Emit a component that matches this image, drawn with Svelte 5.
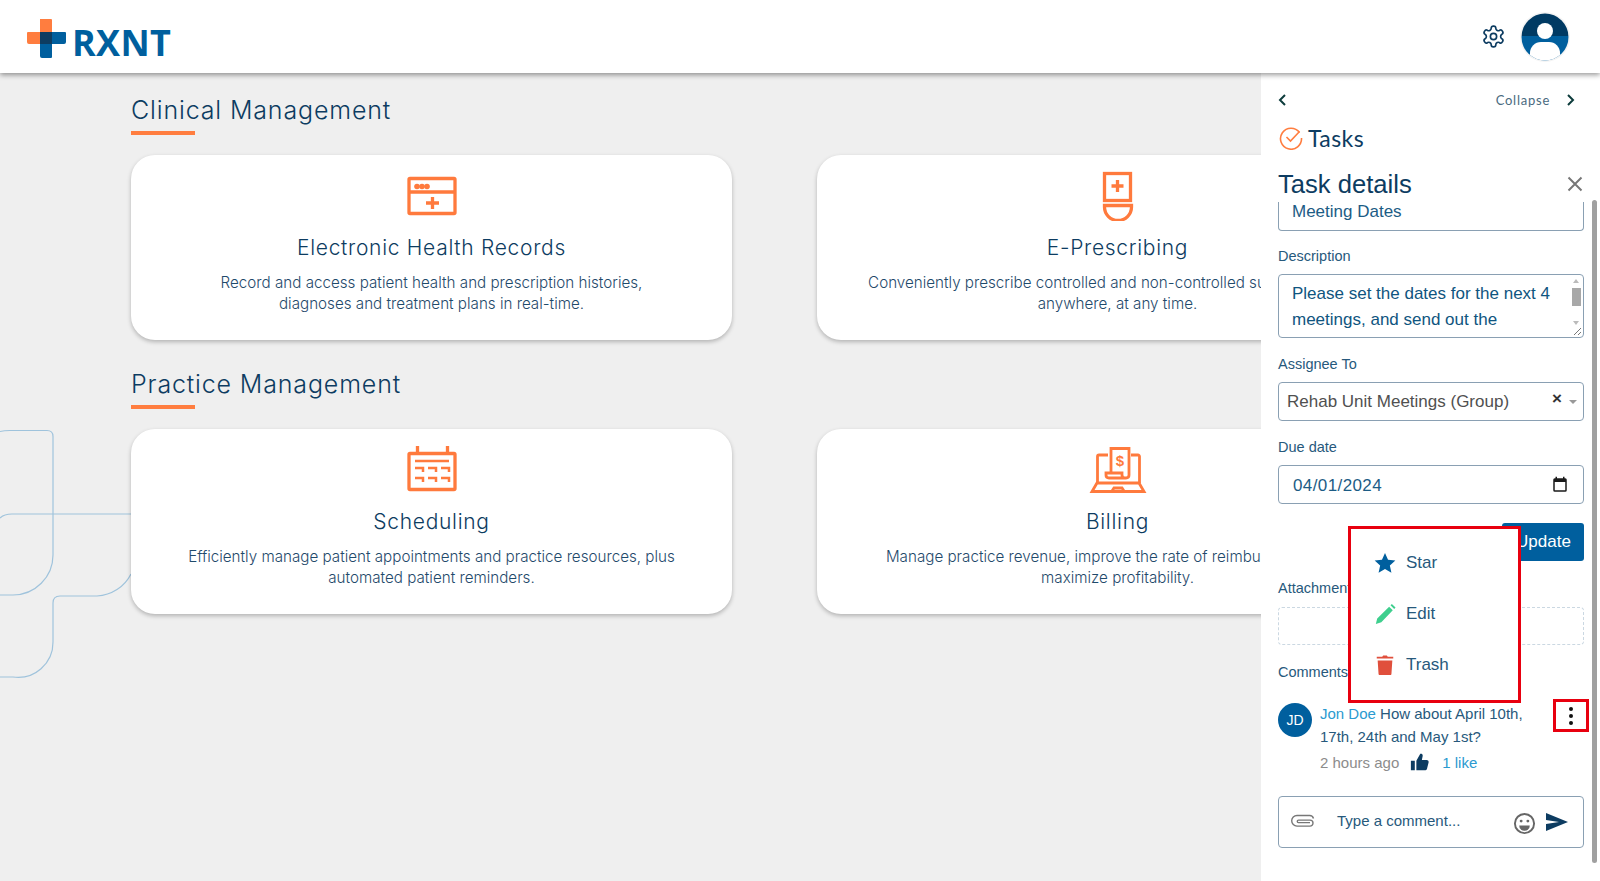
<script>
  const sections = [
    { title: 'Clinical Management', cards: [
      { icon: 'ehr', title: 'Electronic Health Records', lines: ['Record and access patient health and prescription histories,', 'diagnoses and treatment plans in real-time.'] },
      { icon: 'rx', title: 'E-Prescribing', lines: ['Conveniently prescribe controlled and non-controlled substances from', 'anywhere, at any time.'] }
    ]},
    { title: 'Practice Management', cards: [
      { icon: 'cal', title: 'Scheduling', lines: ['Efficiently manage patient appointments and practice resources, plus', 'automated patient reminders.'] },
      { icon: 'bill', title: 'Billing', lines: ['Manage practice revenue, improve the rate of reimbursement and', 'maximize profitability.'] }
    ]}
  ];
</script>

{#snippet cardIcon(name)}
  <svg class="card-icon" viewBox="0 0 60 50" width="60" height="50" fill="none" stroke="#ff7a3d" stroke-width="3.300">
    {#if name === 'ehr'}
      <rect x="7" y="7.500" width="46" height="35" rx="1" />
      <path d="M7 21h46M30.500 26v12M24 32h13" />
      <g fill="#ff7a3d" stroke="none"><circle cx="15" cy="15.500" r="2.800" /><circle cx="20" cy="15.500" r="2.800" /><circle cx="25" cy="15.500" r="2.800" /></g>
    {:else if name === 'rx'}
      <rect x="16.500" y="2.500" width="26" height="27" />
      <path d="M29.500 9v12M23.500 15h12" />
      <path d="M16.500 34.500h27V36a13.500 13.500 0 0 1-27 0z" />
    {:else if name === 'cal'}
      <rect x="7" y="8.500" width="46" height="36" rx="1" />
      <path d="M15.500 1v8M45.500 1v8" />
      <path stroke-width="2.500" d="M13 16h34M13 23h8v4M26 23h8v4M39 23h8v4M13 33h8v4M26 33h8v4M39 33h8v4" />
    {:else}
      <path stroke-width="2.800" d="M20 10h-9a1.500 1.500 0 0 0-1.500 1.500V38M43 10h7a1.500 1.500 0 0 1 1.500 1.500V38" />
      <path stroke-width="2.800" d="M9 38h42l5 8.500H4zM24 46l2-3h8l2 3" />
      <path stroke-width="2.800" d="M23 27V3.500h18V30q0 3-3 3H21q-3 0-3-3v-2h16v2q0 3 3 3" />
      <text x="32" y="21" class="dollar" text-anchor="middle">$</text>
    {/if}
  </svg>
{/snippet}

<div class="page">
  <header class="topbar">
    <div class="logo">
      <svg width="40" height="40" viewBox="0 0 40 40">
        <path fill="#ff7d3f" d="M13 0h11a1 1 0 0 1 1 1v24H2a2 2 0 0 1-2-2V14a1 1 0 0 1 1-1h12z" />
        <path fill="#005f9e" d="M13 13h25a1 1 0 0 1 1 1v9a2 2 0 0 1-2 2H25v13a1 1 0 0 1-1 1H15a2 2 0 0 1-2-2z" />
        <path fill="#0d3c61" d="M13 13h12v12H13z" />
      </svg>
      <span class="logo-text">RXNT</span>
    </div>
    <div class="top-actions">
      <svg width="25" height="25" viewBox="0 0 24 24" fill="none" stroke="#0d3c61" stroke-width="1.600">
        <path d="M12.220 2h-.44a2 2 0 0 0-2 2v.18a2 2 0 0 1-1 1.730l-.43.25a2 2 0 0 1-2 0l-.15-.08a2 2 0 0 0-2.730.73l-.22.38a2 2 0 0 0 .73 2.730l.15.1a2 2 0 0 1 1 1.720v.51a2 2 0 0 1-1 1.740l-.15.09a2 2 0 0 0-.73 2.730l.22.38a2 2 0 0 0 2.730.73l.15-.08a2 2 0 0 1 2 0l.43.25a2 2 0 0 1 1 1.730V20a2 2 0 0 0 2 2h.44a2 2 0 0 0 2-2v-.18a2 2 0 0 1 1-1.730l.43-.25a2 2 0 0 1 2 0l.15.08a2 2 0 0 0 2.730-.73l.22-.39a2 2 0 0 0-.73-2.730l-.15-.08a2 2 0 0 1-1-1.740v-.5a2 2 0 0 1 1-1.740l.15-.09a2 2 0 0 0 .73-2.730l-.22-.38a2 2 0 0 0-2.730-.73l-.15.08a2 2 0 0 1-2 0l-.43-.25a2 2 0 0 1-1-1.730V4a2 2 0 0 0-2-2z" />
        <circle cx="12" cy="12" r="3" />
      </svg>
      <svg class="user" width="50" height="50" viewBox="0 0 50 50">
        <defs><clipPath id="ua"><circle cx="25" cy="25" r="23.500" /></clipPath></defs>
        <circle cx="25" cy="25" r="25" fill="#f4f4f4" />
        <g clip-path="url(#ua)">
          <rect width="50" height="24" fill="#003a63" />
          <rect y="24" width="50" height="26" fill="#005f9e" />
          <circle cx="25" cy="19" r="8" fill="#fff" />
          <path fill="#fff" d="M10 50V41a11 11 0 0 1 11-11h8a11 11 0 0 1 11 11v9z" />
        </g>
      </svg>
    </div>
  </header>

  <div class="body">
    <main class="main">
      <svg class="deco" width="132" height="270" viewBox="0 0 132 270" fill="none" stroke="#9fc3dc" stroke-width="1.200">
        <path d="M0 11.500q4-1 10-1h37q6 0 6 6V135a40 40 0 0 1-40 40H0" />
        <path d="M0 98q4-4 12-4h120" />
        <path d="M131 154a40 40 0 0 1-34 22H60q-7 0-7 7v39a35 35 0 0 1-40 35H0" />
      </svg>
      {#each sections as s}
        <section class="section">
          <h2>{s.title}</h2>
          <div class="rule"></div>
          <div class="cards">
            {#each s.cards as c}
              <article class="card">
                {@render cardIcon(c.icon)}
                <h3>{c.title}</h3>
                <p>{c.lines[0]}<br />{c.lines[1]}</p>
              </article>
            {/each}
          </div>
        </section>
      {/each}
    </main>

    <aside class="panel">
      <div class="nav">
        <svg width="12" height="14" viewBox="0 0 12 14" fill="none" stroke="#0d3c3c" stroke-width="2"><path d="M9 2 4 7l5 5" /></svg>
        <div class="collapse">
          <span>Collapse</span>
          <svg width="12" height="14" viewBox="0 0 12 14" fill="none" stroke="#0d3c3c" stroke-width="2"><path d="m3 2 5 5-5 5" /></svg>
        </div>
      </div>
      <div class="tasks">
        <svg width="24" height="24" viewBox="0 0 24 24" fill="none" stroke="#ff7d3f" stroke-width="1.600"><path d="M20.500 6.500A10.500 10.500 0 1 0 22.500 12" /><path d="m7.500 11 4 4 9-9.500" /></svg>
        <span>Tasks</span>
      </div>
      <div class="title-row">
        <h1>Task details</h1>
        <svg width="18" height="18" viewBox="0 0 18 18" stroke="#777" stroke-width="2"><path d="m2.500 2.500 13 13M15.500 2.500l-13 13" /></svg>
      </div>

      <div class="field first">Meeting Dates</div>

      <div class="label desc">Description</div>
      <div class="field area">
        <div>Please set the dates for the next 4<br />meetings, and send out the</div>
        <div class="mini-scroll"><i class="up"></i><b></b><i class="down"></i></div>
        <svg class="grip" width="12" height="12" viewBox="0 0 12 12" stroke="#777"><path d="M3 10 10 3M7 10l3-3" /></svg>
      </div>

      <div class="label">Assignee To</div>
      <div class="field select">
        <span>Rehab Unit Meetings (Group)</span>
        <span class="sel-x">×</span>
        <i class="caret"></i>
      </div>

      <div class="label">Due date</div>
      <div class="field date">
        <span>04/01/2024</span>
        <svg width="18" height="18" viewBox="0 0 24 24" fill="#1a1a1a"><path d="M19 3h-1V1h-2v2H8V1H6v2H5a2 2 0 0 0-2 2v14a2 2 0 0 0 2 2h14a2 2 0 0 0 2-2V5a2 2 0 0 0-2-2zm0 16H5V8h14z" /></svg>
      </div>

      <div class="actions"><button>Update</button></div>

      <div class="label attach">Attachments</div>
      <div class="dropzone"></div>

      <div class="label attach">Comments</div>

      <div class="comment">
        <div class="avatar">JD</div>
        <div class="comment-body">
          <div class="comment-text"><span class="link">Jon Doe</span> How about April 10th,<br />17th, 24th and May 1st?</div>
          <div class="meta">
            <span class="ago">2 hours ago</span>
            <svg width="19" height="18" viewBox="0 0 24 23" fill="#0d3c61"><path d="M1 10h5v12H1zM8 22V10l5-9c2-.5 3.500.8 3 3l-1 5h6c2 0 3 1.500 2.600 3l-2 8c-.4 1.500-1.500 2-3 2z" /></svg>
            <span class="link">1 like</span>
          </div>
        </div>
      </div>

      <div class="composer">
        <svg class="clip" width="24" height="14" viewBox="0 0 24 14" fill="none" stroke="#777" stroke-width="1.400"><path d="M22.500 4.500A4 4 0 0 0 18.500 1.500H6a5.300 5.300 0 0 0 0 10.600h13a3 3 0 0 0 0-6H7.500a1 1 0 0 0 0 2.500H19" /></svg>
        <span class="placeholder">Type a comment...</span>
        <svg class="smile" width="23" height="23" viewBox="0 0 24 24" fill="none" stroke="#666" stroke-width="2"><circle cx="12" cy="12" r="10" /><circle cx="8.500" cy="9.500" r="1.500" fill="#666" stroke="none" /><circle cx="15.500" cy="9.500" r="1.500" fill="#666" stroke="none" /><path fill="#666" stroke="none" d="M6.500 14h11a5.500 5.500 0 0 1-11 0z" /></svg>
        <svg width="24" height="20" viewBox="0 0 24 20" fill="#0d3c61"><path d="M1 1v7l13 2-13 2v7l22-9z" /></svg>
      </div>

      <div class="scrollbar"></div>

      <div class="menu">
        <div class="menu-item">
          <svg width="22" height="22" viewBox="0 0 24 24" fill="#005f9e"><path d="m12 1 3.300 7.500 8 .8-6 5.400 1.700 8L12 18.600 5 22.700l1.700-8-6-5.400 8-.8z" /></svg>
          <span>Star</span>
        </div>
        <div class="menu-item">
          <svg width="22" height="22" viewBox="0 0 24 24" fill="#3ecf8e"><path d="m16.500 4 4 4L8 21l-6 2 1.500-6zM18 2.500 19.500 1l4 4L22 6.500z" /></svg>
          <span>Edit</span>
        </div>
        <div class="menu-item">
          <svg width="22" height="22" viewBox="0 0 24 24" fill="#e04f3c"><path d="M4 7h16l-1 15a1.500 1.500 0 0 1-1.500 1h-11A1.500 1.500 0 0 1 5 22zM3 3h6l1-1.500h4L15 3h6v2H3z" /></svg>
          <span>Trash</span>
        </div>
      </div>
      <div class="dots-box"><i></i><i></i><i></i></div>
    </aside>
  </div>
</div>

<style>
  :global(body) { margin: 0; background: #efefef; }
  .page { width: 1600px; height: 881px; display: flex; flex-direction: column; overflow: hidden; font-family: "Liberation Sans", Arial, sans-serif; }

  .topbar { height: 73px; flex: none; background: #fff; box-shadow: 0 2px 5px rgba(0,0,0,.4); display: flex; align-items: center; justify-content: space-between; position: relative; z-index: 3; }
  .logo { display: flex; align-items: center; gap: 5px; margin-left: 27px; margin-top: 4px; }
  .logo-text { font-family: "Open Sans", sans-serif; font-weight: 700; font-size: 36px; line-height: 40px; color: #005f9e; margin-top: 9px; letter-spacing: .3px; }
  .top-actions { display: flex; align-items: center; gap: 14px; margin-right: 30px; margin-top: 3px; }
  .top-actions svg:first-child { margin-top: -4px; }
  .user { margin-top: -2px; }

  .body { flex: 1; display: flex; min-height: 0; }
  .main { flex: 1; min-width: 0; position: relative; overflow: hidden; background: #efefef; padding: 20px 0 0 131px; }
  .deco { position: absolute; left: 0; top: 347px; }

  .section + .section { margin-top: 27px; }
  h2 { margin: 0; font-family: Inter, sans-serif; font-weight: 300; font-size: 25px; line-height: 34px; letter-spacing: .85px; color: #0d3c61; }
  .rule { width: 64px; height: 4px; background: #ff7d3f; margin-top: 4px; }
  .cards { display: grid; grid-template-columns: 601px 601px; gap: 85px; margin-top: 20px; }
  .card { position: relative; height: 185px; box-sizing: border-box; padding-top: 16px; background: #fff; border-radius: 24px; box-shadow: 0 2px 4px rgba(0,0,0,.25); text-align: center; }
  .card-icon { display: block; margin: 0 auto; }
  .dollar { font-family: "Liberation Sans", sans-serif; font-weight: 700; font-size: 15px; fill: #ff7a3d; stroke: none; }
  h3 { margin: 13px 0 0; font-family: Inter, sans-serif; font-weight: 300; font-size: 21px; line-height: 28px; letter-spacing: .7px; color: #0d3c61; }
  .card p { margin: 10px 0 0; font-family: Inter, sans-serif; font-weight: 300; font-size: 15.200px; line-height: 21px; color: #1f4a6b; }

  .panel { width: 339px; flex: none; box-sizing: border-box; background: #fff; padding: 0 16px 0 17px; position: relative; z-index: 2; }
  .nav { display: flex; justify-content: space-between; align-items: center; height: 20px; margin-top: 17px; }
  .nav > svg { margin-left: -2px; }
  .collapse { display: flex; align-items: center; gap: 15px; margin-right: 7px; font-family: Lato, sans-serif; font-size: 13px; letter-spacing: .75px; color: #4a6a80; }
  .tasks { display: flex; align-items: center; gap: 5px; height: 24px; margin-top: 16px; margin-left: 1px; font-family: Lato, sans-serif; font-size: 23px; letter-spacing: .4px; color: #0d3c61; }
  .title-row { display: flex; justify-content: space-between; align-items: center; height: 32px; margin-top: 18px; }
  h1 { margin: 0; font-weight: 400; font-size: 25.600px; line-height: 32px; color: #0d3c61; }

  .field { box-sizing: border-box; border: 1px solid #8aa0b3; border-radius: 4px; font-size: 17px; color: #1c5c85; }
  .first { height: 29px; margin-top: 2px; border-top: 0; border-radius: 0 0 4px 4px; padding: 0 0 0 13px; line-height: 19px; }
  .label { height: 18px; line-height: 18px; font-size: 14.500px; color: #27597c; margin-top: 17px; }
  .label.desc { margin-top: 16px; }
  .label + .field { margin-top: 9px; }
  .area { height: 64px; padding: 6px 0 0 13px; line-height: 26px; position: relative; color: #0f5580; }
  .mini-scroll { position: absolute; right: 2px; top: 2px; width: 10px; height: 48px; display: flex; flex-direction: column; align-items: center; justify-content: space-between; }
  .mini-scroll b { width: 9px; height: 18px; background: #a8a8a8; margin: 5px 0 auto; }
  .mini-scroll i { width: 0; height: 0; border-left: 3px solid transparent; border-right: 3px solid transparent; }
  .mini-scroll .up { border-bottom: 4px solid #bbb; margin-top: 2px; }
  .mini-scroll .down { border-top: 4px solid #bbb; }
  .grip { position: absolute; right: 0; bottom: 0; }
  .select, .date { height: 39px; display: flex; align-items: center; }
  .select { padding: 0 6px 0 8px; color: #505050; }
  .select span:first-child { flex: 1; }
  .sel-x { font-size: 17px; font-weight: 700; color: #333; margin-top: -6px; margin-right: 7px; }
  .caret { width: 0; height: 0; border-left: 4.500px solid transparent; border-right: 4.500px solid transparent; border-top: 4.500px solid #999; }
  .date { padding: 2px 14px 0; justify-content: space-between; letter-spacing: .4px; }
  .date svg { margin-top: -2px; }
  .actions { display: flex; justify-content: flex-end; margin-top: 19px; }
  button { width: 82px; height: 38px; border: 0; border-radius: 3px; background: #005f9e; color: #fff; font: 17px "Liberation Sans", sans-serif; padding: 0 0 0 1px; }
  .label.attach { margin-top: 18px; }
  .dropzone { height: 38px; box-sizing: border-box; margin-top: 10px; border: 1px dashed #cbd8e2; border-radius: 4px; }

  .comment { display: flex; gap: 8px; margin-top: 22px; }
  .avatar { width: 34px; height: 34px; flex: none; border-radius: 50%; background: #005f9e; color: #fff; font-size: 14px; line-height: 34px; text-align: center; }
  .comment-text { font-size: 15px; line-height: 22.500px; color: #27597c; }
  .link { color: #2b9ad0; }
  .meta { display: flex; align-items: center; height: 20px; margin-top: 4px; font-size: 15px; }
  .ago { color: #8c8c8c; margin-right: 11px; }
  .meta svg { margin-right: 13px; }

  .composer { height: 52px; box-sizing: border-box; margin-top: 24px; border: 1px solid #8aa0b3; border-radius: 4px; display: flex; align-items: center; padding: 0 14px 0 12px; }
  .clip { margin-top: -2px; }
  .placeholder { font-size: 15px; color: #27597c; margin: -3px 0 0 22px; flex: 1; }
  .smile { margin-right: 9px; margin-top: 2px; }

  .scrollbar { position: absolute; right: 3px; top: 127px; bottom: 18px; width: 5px; background: #a0a0a0; border-radius: 3px; }

  .menu { position: absolute; left: 87px; top: 453px; width: 173px; height: 177px; box-sizing: border-box; border: 3px solid #e8000f; background: #fff; padding: 0 0 2px 23px; display: flex; flex-direction: column; justify-content: center; gap: 29px; }
  .menu-item { display: flex; align-items: center; gap: 10px; height: 22px; font-size: 17px; color: #27597c; }
  .dots-box { position: absolute; left: 292px; top: 626px; width: 36px; height: 33px; box-sizing: border-box; border: 3px solid #e8000f; display: flex; flex-direction: column; align-items: center; justify-content: center; gap: 3px; }
  .dots-box i { width: 4px; height: 4px; border-radius: 50%; background: #111; }
</style>
